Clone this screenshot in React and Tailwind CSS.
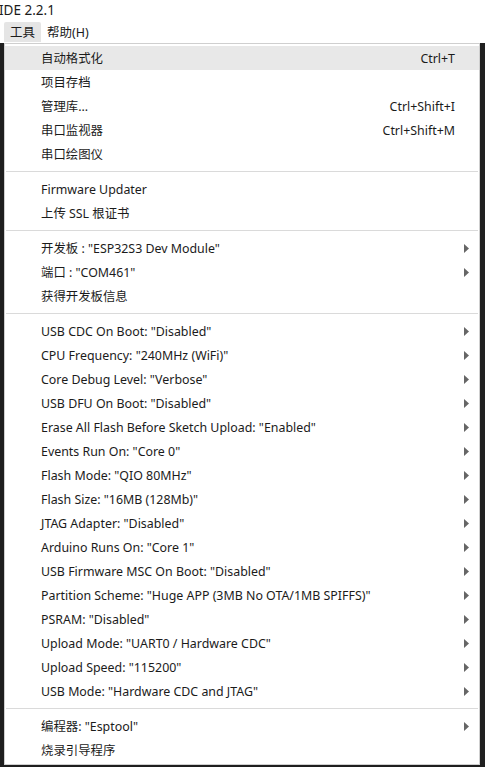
import React from "react";

const font = { fontFamily: '"Noto Sans", "Noto Sans CJK SC", sans-serif' };

const groups = [
  [
    { label: "自动格式化", shortcut: "Ctrl+T", active: true },
    { label: "项目存档" },
    { label: "管理库...", shortcut: "Ctrl+Shift+I" },
    { label: "串口监视器", shortcut: "Ctrl+Shift+M" },
    { label: "串口绘图仪" },
  ],
  [{ label: "Firmware Updater" }, { label: "上传 SSL 根证书" }],
  [
    { label: '开发板 : "ESP32S3 Dev Module"', sub: true },
    { label: '端口 : "COM461"', sub: true },
    { label: "获得开发板信息" },
  ],
  [
    { label: 'USB CDC On Boot: "Disabled"', sub: true },
    { label: 'CPU Frequency: "240MHz (WiFi)"', sub: true },
    { label: 'Core Debug Level: "Verbose"', sub: true },
    { label: 'USB DFU On Boot: "Disabled"', sub: true },
    { label: 'Erase All Flash Before Sketch Upload: "Enabled"', sub: true },
    { label: 'Events Run On: "Core 0"', sub: true },
    { label: 'Flash Mode: "QIO 80MHz"', sub: true },
    { label: 'Flash Size: "16MB (128Mb)"', sub: true },
    { label: 'JTAG Adapter: "Disabled"', sub: true },
    { label: 'Arduino Runs On: "Core 1"', sub: true },
    { label: 'USB Firmware MSC On Boot: "Disabled"', sub: true },
    { label: 'Partition Scheme: "Huge APP (3MB No OTA/1MB SPIFFS)"', sub: true },
    { label: 'PSRAM: "Disabled"', sub: true },
    { label: 'Upload Mode: "UART0 / Hardware CDC"', sub: true },
    { label: 'Upload Speed: "115200"', sub: true },
    { label: 'USB Mode: "Hardware CDC and JTAG"', sub: true },
  ],
  [{ label: '编程器: "Esptool"', sub: true }, { label: "烧录引导程序" }],
];

function Arrow() {
  return (
    <svg width="5" height="9" viewBox="0 0 5 9" className="block">
      <path d="M0 0 L5 4.5 L0 9 Z" fill="#666" />
    </svg>
  );
}

function Item({ item }) {
  return (
    <div
      className={`box-border flex h-[24px] items-center pt-[2px] pl-[36px] pr-[8px] text-[12.4px] text-[#1b1b1b] ${
        item.active ? "bg-[#e8e8e8]" : ""
      }`}
    >
      <span className="flex-1 whitespace-nowrap">{item.label}</span>
      {item.shortcut && <span className="mr-[16px] whitespace-nowrap">{item.shortcut}</span>}
      {item.sub && (
        <span className="mr-[2px] -mt-[2px]">
          <Arrow />
        </span>
      )}
    </div>
  );
}

export default function App() {
  return (
    <div className="h-[767px] w-[485px] overflow-hidden bg-[#1e1e1e]" style={font}>
      <div className="flex h-[21px] items-center bg-white">
        <span className="ml-[-1px] -mt-[1px] text-[13.5px] leading-[17px] text-[#1b1b1b]">IDE 2.2.1</span>
      </div>
      <div className="flex h-[22px] items-start bg-white pl-[4px] text-[12.5px] text-[#1b1b1b]">
        <div className="mt-[1px] box-border flex h-[20px] items-center rounded-t-[2px] bg-[#e5e5e5] px-[6px] pt-[3px]">工具</div>
        <div className="mt-[1px] box-border flex h-[20px] items-center px-[6px] pt-[3px]">帮助(H)</div>
      </div>
      <div className="flex">
        <div className="w-[4px] bg-[#1e1e1e]" />
        <div className="w-[476px] border border-[#cfcfcf] bg-white pt-[2px] pb-[2px]">
          {groups.map((g, gi) => (
            <div key={gi}>
              {gi > 0 && (
                <div className="flex h-[11px] items-center px-[1px]">
                  <div className="h-px w-full bg-[#dadada]" />
                </div>
              )}
              {g.map((it, ii) => (
                <Item key={ii} item={it} />
              ))}
            </div>
          ))}
        </div>
        <div className="w-[5px] bg-[#202020]" />
      </div>
    </div>
  );
}
